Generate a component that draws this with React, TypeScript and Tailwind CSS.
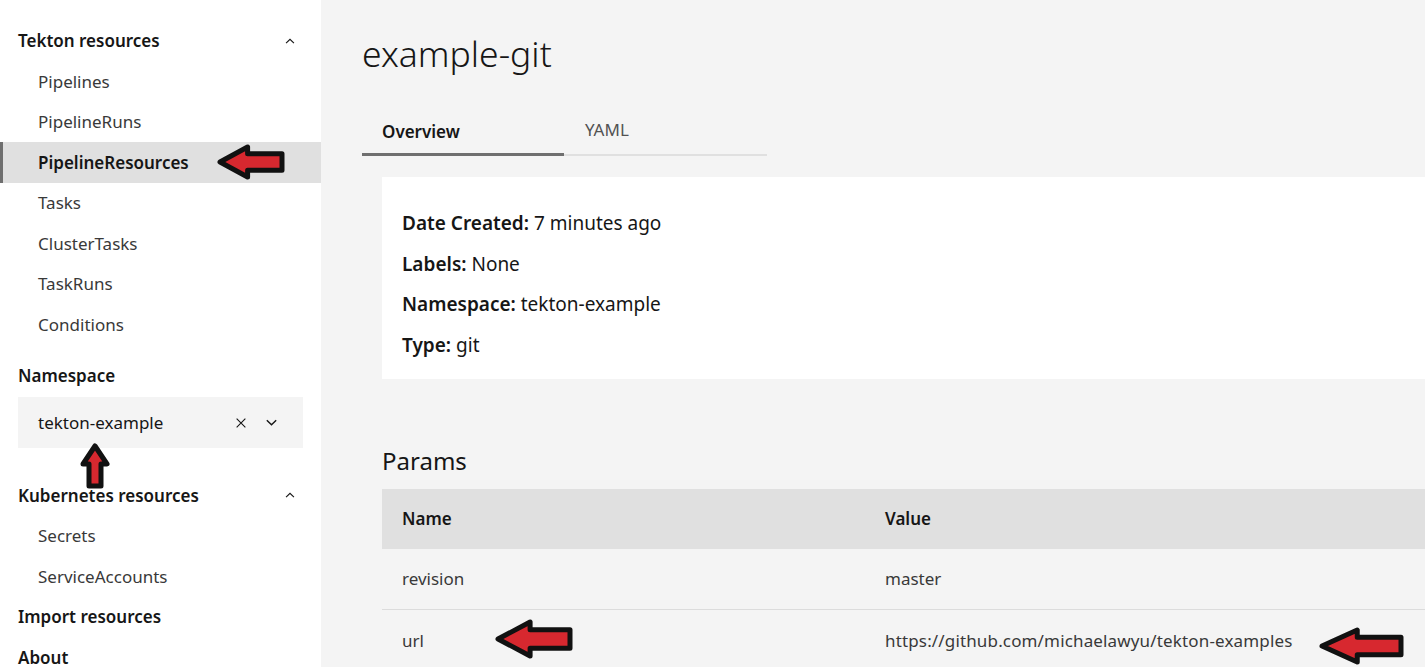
import React from "react";

const FONT = { fontFamily: '"Noto Sans", "Open Sans", sans-serif' };

function LeftArrow({ w, h, className }: { w: number; h: number; className: string }) {
  const hx = w * 0.45;
  const sy1 = h * 0.27;
  const sy2 = h * 0.73;
  return (
    <svg width={w} height={h} viewBox={`0 0 ${w} ${h}`} className={className}>
      <polygon
        points={`3,${h / 2} ${hx},3 ${hx},${sy1} ${w - 3},${sy1} ${w - 3},${sy2} ${hx},${sy2} ${hx},${h - 3}`}
        fill="#d7282f"
        stroke="#111"
        strokeWidth={5}
        strokeLinejoin="round"
      />
    </svg>
  );
}

function UpArrow({ className }: { className: string }) {
  const w = 30;
  const h = 46;
  return (
    <svg width={w} height={h} viewBox={`0 0 ${w} ${h}`} className={className}>
      <polygon
        points={`15,3 27,21 21,21 21,43 9,43 9,21 3,21`}
        fill="#d7282f"
        stroke="#111"
        strokeWidth={5}
        strokeLinejoin="round"
      />
    </svg>
  );
}

function ChevronUp() {
  return (
    <svg width="14" height="14" viewBox="0 0 16 16" fill="none" stroke="#161616" strokeWidth="1.3">
      <path d="M3.5 10.5 L8 6 L12.5 10.5" />
    </svg>
  );
}

function SideItem({ label, selected }: { label: string; selected?: boolean }) {
  if (selected) {
    return (
      <div className="flex h-[40.5px] shrink-0 items-center border-l-[3px] border-[#6f6f6f] bg-[#e0e0e0] pl-[35px] text-[17px] font-semibold text-[#161616]">
        {label}
      </div>
    );
  }
  return (
    <div className="flex h-[40.5px] shrink-0 items-center pl-[38px] text-[17px] text-[#393939]">{label}</div>
  );
}

function SideHeader({ label, chevron }: { label: string; chevron?: boolean }) {
  return (
    <div className="flex h-[40.5px] shrink-0 items-center justify-between pl-[18px] pr-[24px] text-[17px] font-semibold text-[#161616]">
      <span>{label}</span>
      {chevron && <ChevronUp />}
    </div>
  );
}

export default function App() {
  return (
    <div className="relative flex h-[667px] w-[1425px] overflow-hidden bg-[#f4f4f4]" style={FONT}>
      <aside className="flex w-[321px] shrink-0 flex-col bg-white pt-[20.5px]">
        <SideHeader label="Tekton resources" chevron />
        <SideItem label="Pipelines" />
        <SideItem label="PipelineRuns" />
        <SideItem label="PipelineResources" selected />
        <SideItem label="Tasks" />
        <SideItem label="ClusterTasks" />
        <SideItem label="TaskRuns" />
        <SideItem label="Conditions" />
        <div className="mt-[11px] shrink-0">
          <SideHeader label="Namespace" />
        </div>
        <div className="mx-[18px] mt-[1px] flex h-[51px] shrink-0 items-center justify-between bg-[#f4f4f4] pl-[20px] pr-[24px] text-[17px] text-[#161616]">
          <span>tekton-example</span>
          <div className="flex items-center gap-[16px]">
            <svg width="14" height="14" viewBox="0 0 16 16" fill="none" stroke="#161616" strokeWidth="1.3">
              <path d="M3 3 L13 13 M13 3 L3 13" />
            </svg>
            <svg width="15" height="15" viewBox="0 0 16 16" fill="none" stroke="#161616" strokeWidth="1.5">
              <path d="M3 5.5 L8 10.5 L13 5.5" />
            </svg>
          </div>
        </div>
        <div className="mt-[27px] shrink-0">
          <SideHeader label="Kubernetes resources" chevron />
        </div>
        <SideItem label="Secrets" />
        <SideItem label="ServiceAccounts" />
        <SideHeader label="Import resources" />
        <SideHeader label="About" />
      </aside>

      <main className="flex min-w-0 flex-1 flex-col pl-[41px]">
        <h1 className="mt-[29px] shrink-0 text-[35.5px] font-light leading-[48px] text-[#161616]">example-git</h1>

        <div className="mt-[33px] flex shrink-0">
          <div className="flex h-[46px] w-[202px] items-center border-b-[3px] border-[#6f6f6f] pl-[20px] pt-[1px] text-[17px] font-semibold text-[#161616]">
            Overview
          </div>
          <div className="flex h-[46px] w-[203px] items-center border-b-[2px] border-[#e0e0e0] pb-[4px] pl-[21px] text-[17px] text-[#525252]">
            YAML
          </div>
        </div>

        <div className="ml-[20px] mt-[21px] flex h-[202px] w-[1100px] shrink-0 flex-col bg-white pl-[20px] pt-[26px] text-[19px] text-[#161616]">
          <div className="flex h-[40.6px] items-center">
            <span className="font-semibold">Date Created:</span>&nbsp;7 minutes ago
          </div>
          <div className="flex h-[40.6px] items-center">
            <span className="font-semibold">Labels:</span>&nbsp;None
          </div>
          <div className="flex h-[40.6px] items-center">
            <span className="font-semibold">Namespace:</span>&nbsp;tekton-example
          </div>
          <div className="flex h-[40.6px] items-center">
            <span className="font-semibold">Type:</span>&nbsp;git
          </div>
        </div>

        <div className="ml-[20px] mt-[67px] shrink-0 text-[24px] leading-[30px] text-[#161616]">Params</div>

        <div className="ml-[20px] mt-[13px] w-[1100px] shrink-0 text-[17px]">
          <div className="flex h-[60px] items-center bg-[#e0e0e0] font-semibold text-[#161616]">
            <div className="w-[483px] pl-[20px]">Name</div>
            <div className="pl-[20px]">Value</div>
          </div>
          <div className="flex h-[61px] items-center border-b border-[#dcdcdc] bg-[#f4f4f4] text-[#393939]">
            <div className="w-[483px] pl-[20px]">revision</div>
            <div className="pl-[20px]">master</div>
          </div>
          <div className="flex h-[61px] items-center bg-[#f4f4f4] text-[#393939]">
            <div className="w-[483px] pl-[20px]">url</div>
            <div className="pl-[20px] tracking-[0.15px]">https://github.com/michaelawyu/tekton-examples</div>
          </div>
        </div>
      </main>

      <LeftArrow w={68} h={36} className="absolute left-[217px] top-[144px]" />
      <UpArrow className="absolute left-[80px] top-[443px]" />
      <LeftArrow w={78} h={40} className="absolute left-[495px] top-[619px]" />
      <LeftArrow w={85} h={38} className="absolute left-[1319px] top-[627px]" />
    </div>
  );
}
